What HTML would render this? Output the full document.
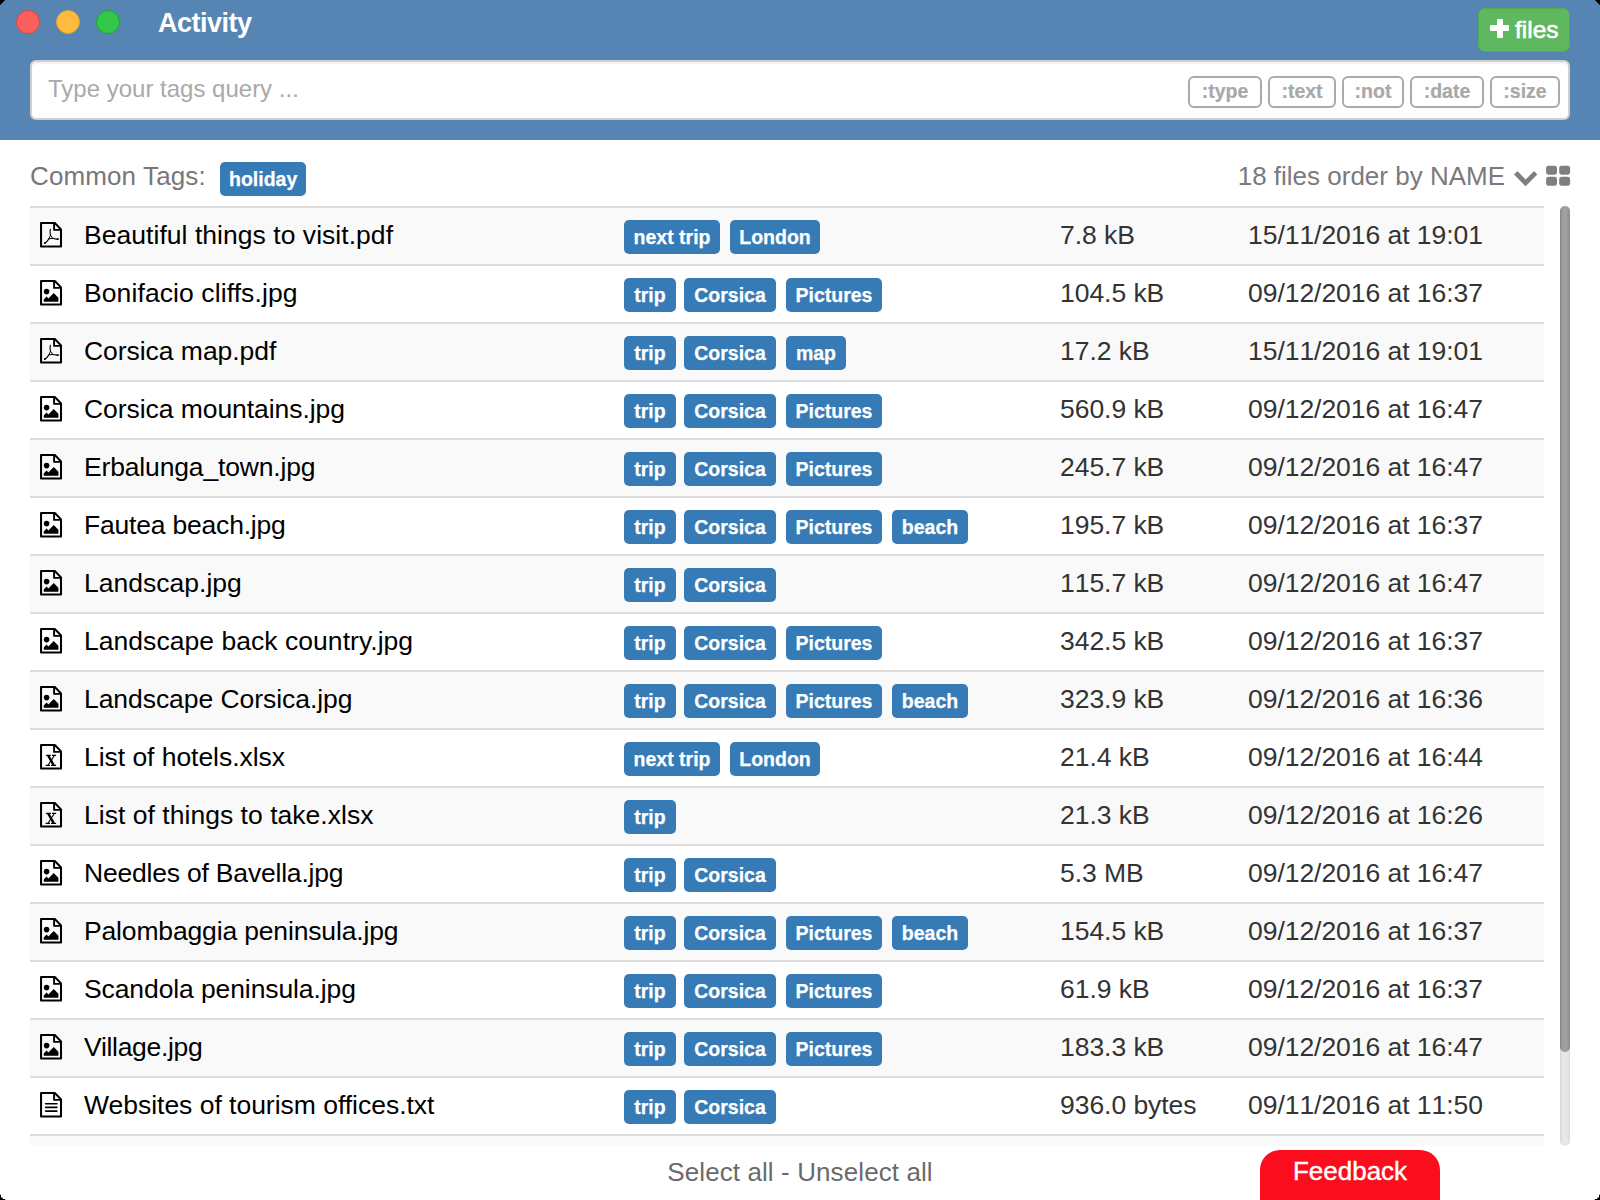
<!DOCTYPE html>
<html><head><meta charset="utf-8">
<style>
*{box-sizing:border-box;margin:0;padding:0}
html,body{width:1600px;height:1200px;overflow:hidden;background:#fff;font-family:"Liberation Sans",sans-serif}
.hdr{position:absolute;left:0;top:0;width:1600px;height:140px;background:#5785b3}
.dot{position:absolute;top:10px;width:24px;height:24px;border-radius:50%}
.title{position:absolute;left:158px;top:6px;font-size:27px;font-weight:bold;color:#fff;line-height:34px;letter-spacing:-0.5px}
.addbtn{position:absolute;left:1478px;top:8px;width:92px;height:44px;background:#5fb760;border:1px solid #52ad52;border-radius:7px}
.plus1{position:absolute;left:1490px;top:25px;width:19px;height:6px;background:#fff;border-radius:1px}
.plus2{position:absolute;left:1496.5px;top:19px;width:6px;height:19px;background:#fff;border-radius:1px}
.ftxt{position:absolute;left:1515px;top:15px;font-size:24.5px;font-weight:normal;color:#fff;line-height:30px;-webkit-text-stroke:0.6px #fff}
.search{position:absolute;left:30px;top:60px;width:1540px;height:60px;background:#fff;border:2px solid #cfcfcf;border-radius:6px;box-shadow:inset 0 2px 2px rgba(0,0,0,0.06)}
.ph{position:absolute;left:16px;top:12px;font-size:24px;color:#a9a9a9;line-height:30px}
.fb{position:absolute;top:14px;height:32px;border:2px solid #aaa;border-radius:6px;color:#a8a8a8;font-size:19.5px;font-weight:bold;line-height:26px;text-align:center;-webkit-text-stroke:0.2px #a8a8a8}
.ctl{position:absolute;left:30px;top:159px;font-size:26px;color:#777;line-height:34px;letter-spacing:0.12px}
.lb{display:inline-block;height:34px;background:#367bb6;color:#fff;font-weight:bold;font-size:19.5px;line-height:35px;text-align:center;border-radius:5px;vertical-align:top;letter-spacing:0;-webkit-text-stroke:0.25px #fff}
.order{position:absolute;right:95px;top:159px;font-size:26px;color:#7a7a7a;line-height:34px}
.row{position:absolute;left:30px;width:1514px;height:58px;border-top:2px solid #ddd}
.ic{position:absolute;left:9px;top:13px}
.nm{position:absolute;left:54px;top:12px;font-size:26.5px;color:#000;line-height:30px;white-space:nowrap;letter-spacing:0.05px}
.tags{position:absolute;left:594px;top:12px;white-space:nowrap;font-size:0}
.sz{position:absolute;left:1030px;top:12px;font-size:26.5px;color:#333;line-height:30px;letter-spacing:-0.05px;font-kerning:none}
.dt{position:absolute;left:1218px;top:12px;font-size:26.5px;color:#333;line-height:30px;letter-spacing:-0.05px;font-kerning:none}
.sb{position:absolute;left:1560px;top:206px;width:10px;height:940px;border-radius:5px;background:linear-gradient(90deg,#d6d6d6 0%,#e6e6e6 25%,#e8e8e8 60%,#dcdcdc 100%)}
.sbt{position:absolute;left:0;top:0;width:10px;height:846px;border-radius:5px;background:linear-gradient(90deg,#858585 0%,#9d9d9d 25%,#a2a2a2 60%,#8c8c8c 100%)}
.foot{position:absolute;left:0;width:1600px;top:1156px;text-align:center;font-size:26px;color:#6a6a6a;line-height:32px;letter-spacing:0.1px}
.feed{position:absolute;left:1260px;top:1150px;width:180px;height:60px;background:#fb0d1d;border-radius:20px 20px 0 0;color:#fff;font-size:26px;line-height:42px;text-align:center;-webkit-text-stroke:0.4px #fff}
</style></head><body>
<div class="hdr">
  <div class="dot" style="left:16px;background:#fc605c;border:1px solid #e0443e"></div>
  <div class="dot" style="left:56px;background:#fdbc40;border:1px solid #dea123"></div>
  <div class="dot" style="left:96px;background:#34c84a;border:1px solid #1aab29"></div>
  <div class="title">Activity</div>
  <div class="addbtn"></div><div class="plus1"></div><div class="plus2"></div><div class="ftxt">files</div>
  <div class="search">
    <div class="ph">Type your tags query ...</div>
    <div class="fb" style="left:1156px;width:74px">:type</div>
    <div class="fb" style="left:1236px;width:68px">:text</div>
    <div class="fb" style="left:1310px;width:62px">:not</div>
    <div class="fb" style="left:1378px;width:74px">:date</div>
    <div class="fb" style="left:1458px;width:70px">:size</div>
  </div>
</div>
<div class="ctl">Common Tags: <span class="lb" style="width:86px;margin-left:7px;position:relative;top:3px">holiday</span></div>
<div class="order">18 files order by NAME</div>
<svg style="position:absolute;left:1505px;top:158px" width="70" height="35" viewBox="1505 158 70 35">
  <path d="M1513.97 174.6L1517.47 171.1L1525.56 179.4L1534.09 171.1L1537.37 174.4L1525.56 186.2Z" fill="#7f7f7f"/>
  <rect x="1546.1" y="165.7" width="10.9" height="9" rx="2.4" fill="#7f7f7f"/>
  <rect x="1559.2" y="165.7" width="10.9" height="9" rx="2.4" fill="#7f7f7f"/>
  <rect x="1546.1" y="176.8" width="10.9" height="9" rx="2.4" fill="#7f7f7f"/>
  <rect x="1559.2" y="176.8" width="10.9" height="9" rx="2.4" fill="#7f7f7f"/>
</svg>
<div class="row" style="top:206px;background:#f9f9f9"><svg class="ic" width="26" height="30" viewBox="0 0 26 30"><path d="M2.05 1.95H15.8L22 8.4V25.4H2.05Z" fill="none" stroke="#000" stroke-width="2.05" stroke-linejoin="round"/><path d="M15.1 2V8.9H21.9" fill="none" stroke="#000" stroke-width="1.9" stroke-linejoin="round"/><path d="M11.4 8.3C11 9.6 10.9 11 11.2 12.5L11.5 14.2" fill="none" stroke="#000" stroke-width="1.15" stroke-linecap="round"/><path d="M11.5 14.2L9.9 17.9L13.6 17.3Z" fill="none" stroke="#000" stroke-width="0.95" stroke-linejoin="round"/><path d="M9.9 17.8C8.9 19.8 7.4 21.2 5.7 22.2M13.4 17.3C15 18.1 17 18.1 19.1 18" fill="none" stroke="#000" stroke-width="1.2" stroke-linecap="round"/><ellipse cx="5.9" cy="22" rx="1.1" ry="0.85" transform="rotate(-40 5.9 22)"/><ellipse cx="18.7" cy="18" rx="1.2" ry="0.85"/></svg><span class="nm" style="letter-spacing:0.041px">Beautiful things to visit.pdf</span><span class="tags"><span class="lb" style="width:96px;margin-right:10px">next trip</span><span class="lb" style="width:90px;margin-right:10px">London</span></span><span class="sz">7.8 kB</span><span class="dt">15/11/2016 at 19:01</span></div>
<div class="row" style="top:264px;background:#fff"><svg class="ic" width="26" height="30" viewBox="0 0 26 30"><path d="M2.05 1.95H15.8L22 8.4V25.4H2.05Z" fill="none" stroke="#000" stroke-width="2.05" stroke-linejoin="round"/><path d="M15.1 2V8.9H21.9" fill="none" stroke="#000" stroke-width="1.9" stroke-linejoin="round"/><circle cx="7.6" cy="12.6" r="2.8"/><path d="M4.75 22.8V20.4L7.6 17.6L9.4 19.4L14.75 14.1L19.4 18.7V22.8Z"/></svg><span class="nm" style="letter-spacing:0.097px">Bonifacio cliffs.jpg</span><span class="tags"><span class="lb" style="width:52px;margin-right:8px">trip</span><span class="lb" style="width:92px;margin-right:10px">Corsica</span><span class="lb" style="width:96px;margin-right:10px">Pictures</span></span><span class="sz">104.5 kB</span><span class="dt">09/12/2016 at 16:37</span></div>
<div class="row" style="top:322px;background:#f9f9f9"><svg class="ic" width="26" height="30" viewBox="0 0 26 30"><path d="M2.05 1.95H15.8L22 8.4V25.4H2.05Z" fill="none" stroke="#000" stroke-width="2.05" stroke-linejoin="round"/><path d="M15.1 2V8.9H21.9" fill="none" stroke="#000" stroke-width="1.9" stroke-linejoin="round"/><path d="M11.4 8.3C11 9.6 10.9 11 11.2 12.5L11.5 14.2" fill="none" stroke="#000" stroke-width="1.15" stroke-linecap="round"/><path d="M11.5 14.2L9.9 17.9L13.6 17.3Z" fill="none" stroke="#000" stroke-width="0.95" stroke-linejoin="round"/><path d="M9.9 17.8C8.9 19.8 7.4 21.2 5.7 22.2M13.4 17.3C15 18.1 17 18.1 19.1 18" fill="none" stroke="#000" stroke-width="1.2" stroke-linecap="round"/><ellipse cx="5.9" cy="22" rx="1.1" ry="0.85" transform="rotate(-40 5.9 22)"/><ellipse cx="18.7" cy="18" rx="1.2" ry="0.85"/></svg><span class="nm" style="letter-spacing:-0.043px">Corsica map.pdf</span><span class="tags"><span class="lb" style="width:52px;margin-right:8px">trip</span><span class="lb" style="width:92px;margin-right:10px">Corsica</span><span class="lb" style="width:60px;margin-right:10px">map</span></span><span class="sz">17.2 kB</span><span class="dt">15/11/2016 at 19:01</span></div>
<div class="row" style="top:380px;background:#fff"><svg class="ic" width="26" height="30" viewBox="0 0 26 30"><path d="M2.05 1.95H15.8L22 8.4V25.4H2.05Z" fill="none" stroke="#000" stroke-width="2.05" stroke-linejoin="round"/><path d="M15.1 2V8.9H21.9" fill="none" stroke="#000" stroke-width="1.9" stroke-linejoin="round"/><circle cx="7.6" cy="12.6" r="2.8"/><path d="M4.75 22.8V20.4L7.6 17.6L9.4 19.4L14.75 14.1L19.4 18.7V22.8Z"/></svg><span class="nm" style="letter-spacing:-0.06px">Corsica mountains.jpg</span><span class="tags"><span class="lb" style="width:52px;margin-right:8px">trip</span><span class="lb" style="width:92px;margin-right:10px">Corsica</span><span class="lb" style="width:96px;margin-right:10px">Pictures</span></span><span class="sz">560.9 kB</span><span class="dt">09/12/2016 at 16:47</span></div>
<div class="row" style="top:438px;background:#f9f9f9"><svg class="ic" width="26" height="30" viewBox="0 0 26 30"><path d="M2.05 1.95H15.8L22 8.4V25.4H2.05Z" fill="none" stroke="#000" stroke-width="2.05" stroke-linejoin="round"/><path d="M15.1 2V8.9H21.9" fill="none" stroke="#000" stroke-width="1.9" stroke-linejoin="round"/><circle cx="7.6" cy="12.6" r="2.8"/><path d="M4.75 22.8V20.4L7.6 17.6L9.4 19.4L14.75 14.1L19.4 18.7V22.8Z"/></svg><span class="nm" style="letter-spacing:-0.156px">Erbalunga_town.jpg</span><span class="tags"><span class="lb" style="width:52px;margin-right:8px">trip</span><span class="lb" style="width:92px;margin-right:10px">Corsica</span><span class="lb" style="width:96px;margin-right:10px">Pictures</span></span><span class="sz">245.7 kB</span><span class="dt">09/12/2016 at 16:47</span></div>
<div class="row" style="top:496px;background:#fff"><svg class="ic" width="26" height="30" viewBox="0 0 26 30"><path d="M2.05 1.95H15.8L22 8.4V25.4H2.05Z" fill="none" stroke="#000" stroke-width="2.05" stroke-linejoin="round"/><path d="M15.1 2V8.9H21.9" fill="none" stroke="#000" stroke-width="1.9" stroke-linejoin="round"/><circle cx="7.6" cy="12.6" r="2.8"/><path d="M4.75 22.8V20.4L7.6 17.6L9.4 19.4L14.75 14.1L19.4 18.7V22.8Z"/></svg><span class="nm" style="letter-spacing:-0.197px">Fautea beach.jpg</span><span class="tags"><span class="lb" style="width:52px;margin-right:8px">trip</span><span class="lb" style="width:92px;margin-right:10px">Corsica</span><span class="lb" style="width:96px;margin-right:10px">Pictures</span><span class="lb" style="width:76px;margin-right:10px">beach</span></span><span class="sz">195.7 kB</span><span class="dt">09/12/2016 at 16:37</span></div>
<div class="row" style="top:554px;background:#f9f9f9"><svg class="ic" width="26" height="30" viewBox="0 0 26 30"><path d="M2.05 1.95H15.8L22 8.4V25.4H2.05Z" fill="none" stroke="#000" stroke-width="2.05" stroke-linejoin="round"/><path d="M15.1 2V8.9H21.9" fill="none" stroke="#000" stroke-width="1.9" stroke-linejoin="round"/><circle cx="7.6" cy="12.6" r="2.8"/><path d="M4.75 22.8V20.4L7.6 17.6L9.4 19.4L14.75 14.1L19.4 18.7V22.8Z"/></svg><span class="nm" style="letter-spacing:0.014px">Landscap.jpg</span><span class="tags"><span class="lb" style="width:52px;margin-right:8px">trip</span><span class="lb" style="width:92px;margin-right:10px">Corsica</span></span><span class="sz">115.7 kB</span><span class="dt">09/12/2016 at 16:47</span></div>
<div class="row" style="top:612px;background:#fff"><svg class="ic" width="26" height="30" viewBox="0 0 26 30"><path d="M2.05 1.95H15.8L22 8.4V25.4H2.05Z" fill="none" stroke="#000" stroke-width="2.05" stroke-linejoin="round"/><path d="M15.1 2V8.9H21.9" fill="none" stroke="#000" stroke-width="1.9" stroke-linejoin="round"/><circle cx="7.6" cy="12.6" r="2.8"/><path d="M4.75 22.8V20.4L7.6 17.6L9.4 19.4L14.75 14.1L19.4 18.7V22.8Z"/></svg><span class="nm" style="letter-spacing:0.042px">Landscape back country.jpg</span><span class="tags"><span class="lb" style="width:52px;margin-right:8px">trip</span><span class="lb" style="width:92px;margin-right:10px">Corsica</span><span class="lb" style="width:96px;margin-right:10px">Pictures</span></span><span class="sz">342.5 kB</span><span class="dt">09/12/2016 at 16:37</span></div>
<div class="row" style="top:670px;background:#f9f9f9"><svg class="ic" width="26" height="30" viewBox="0 0 26 30"><path d="M2.05 1.95H15.8L22 8.4V25.4H2.05Z" fill="none" stroke="#000" stroke-width="2.05" stroke-linejoin="round"/><path d="M15.1 2V8.9H21.9" fill="none" stroke="#000" stroke-width="1.9" stroke-linejoin="round"/><circle cx="7.6" cy="12.6" r="2.8"/><path d="M4.75 22.8V20.4L7.6 17.6L9.4 19.4L14.75 14.1L19.4 18.7V22.8Z"/></svg><span class="nm" style="letter-spacing:-0.055px">Landscape Corsica.jpg</span><span class="tags"><span class="lb" style="width:52px;margin-right:8px">trip</span><span class="lb" style="width:92px;margin-right:10px">Corsica</span><span class="lb" style="width:96px;margin-right:10px">Pictures</span><span class="lb" style="width:76px;margin-right:10px">beach</span></span><span class="sz">323.9 kB</span><span class="dt">09/12/2016 at 16:36</span></div>
<div class="row" style="top:728px;background:#fff"><svg class="ic" width="26" height="30" viewBox="0 0 26 30"><path d="M2.05 1.95H15.8L22 8.4V25.4H2.05Z" fill="none" stroke="#000" stroke-width="2.05" stroke-linejoin="round"/><path d="M15.1 2V8.9H21.9" fill="none" stroke="#000" stroke-width="1.9" stroke-linejoin="round"/><path d="M6.9 12.3H11.8M12.9 12.3H17.1M6.6 22.4H11M12 22.4H17.1" stroke="#000" stroke-width="1.2"/><path d="M9.2 12.5L14.7 22.2" stroke="#000" stroke-width="2.4"/><path d="M15.4 12.5L9 22.2" stroke="#000" stroke-width="1.1"/></svg><span class="nm" style="letter-spacing:-0.044px">List of hotels.xlsx</span><span class="tags"><span class="lb" style="width:96px;margin-right:10px">next trip</span><span class="lb" style="width:90px;margin-right:10px">London</span></span><span class="sz">21.4 kB</span><span class="dt">09/12/2016 at 16:44</span></div>
<div class="row" style="top:786px;background:#f9f9f9"><svg class="ic" width="26" height="30" viewBox="0 0 26 30"><path d="M2.05 1.95H15.8L22 8.4V25.4H2.05Z" fill="none" stroke="#000" stroke-width="2.05" stroke-linejoin="round"/><path d="M15.1 2V8.9H21.9" fill="none" stroke="#000" stroke-width="1.9" stroke-linejoin="round"/><path d="M6.9 12.3H11.8M12.9 12.3H17.1M6.6 22.4H11M12 22.4H17.1" stroke="#000" stroke-width="1.2"/><path d="M9.2 12.5L14.7 22.2" stroke="#000" stroke-width="2.4"/><path d="M15.4 12.5L9 22.2" stroke="#000" stroke-width="1.1"/></svg><span class="nm" style="letter-spacing:0.031px">List of things to take.xlsx</span><span class="tags"><span class="lb" style="width:52px;margin-right:8px">trip</span></span><span class="sz">21.3 kB</span><span class="dt">09/12/2016 at 16:26</span></div>
<div class="row" style="top:844px;background:#fff"><svg class="ic" width="26" height="30" viewBox="0 0 26 30"><path d="M2.05 1.95H15.8L22 8.4V25.4H2.05Z" fill="none" stroke="#000" stroke-width="2.05" stroke-linejoin="round"/><path d="M15.1 2V8.9H21.9" fill="none" stroke="#000" stroke-width="1.9" stroke-linejoin="round"/><circle cx="7.6" cy="12.6" r="2.8"/><path d="M4.75 22.8V20.4L7.6 17.6L9.4 19.4L14.75 14.1L19.4 18.7V22.8Z"/></svg><span class="nm" style="letter-spacing:-0.198px">Needles of Bavella.jpg</span><span class="tags"><span class="lb" style="width:52px;margin-right:8px">trip</span><span class="lb" style="width:92px;margin-right:10px">Corsica</span></span><span class="sz">5.3 MB</span><span class="dt">09/12/2016 at 16:47</span></div>
<div class="row" style="top:902px;background:#f9f9f9"><svg class="ic" width="26" height="30" viewBox="0 0 26 30"><path d="M2.05 1.95H15.8L22 8.4V25.4H2.05Z" fill="none" stroke="#000" stroke-width="2.05" stroke-linejoin="round"/><path d="M15.1 2V8.9H21.9" fill="none" stroke="#000" stroke-width="1.9" stroke-linejoin="round"/><circle cx="7.6" cy="12.6" r="2.8"/><path d="M4.75 22.8V20.4L7.6 17.6L9.4 19.4L14.75 14.1L19.4 18.7V22.8Z"/></svg><span class="nm" style="letter-spacing:-0.154px">Palombaggia peninsula.jpg</span><span class="tags"><span class="lb" style="width:52px;margin-right:8px">trip</span><span class="lb" style="width:92px;margin-right:10px">Corsica</span><span class="lb" style="width:96px;margin-right:10px">Pictures</span><span class="lb" style="width:76px;margin-right:10px">beach</span></span><span class="sz">154.5 kB</span><span class="dt">09/12/2016 at 16:37</span></div>
<div class="row" style="top:960px;background:#fff"><svg class="ic" width="26" height="30" viewBox="0 0 26 30"><path d="M2.05 1.95H15.8L22 8.4V25.4H2.05Z" fill="none" stroke="#000" stroke-width="2.05" stroke-linejoin="round"/><path d="M15.1 2V8.9H21.9" fill="none" stroke="#000" stroke-width="1.9" stroke-linejoin="round"/><circle cx="7.6" cy="12.6" r="2.8"/><path d="M4.75 22.8V20.4L7.6 17.6L9.4 19.4L14.75 14.1L19.4 18.7V22.8Z"/></svg><span class="nm" style="letter-spacing:-0.102px">Scandola peninsula.jpg</span><span class="tags"><span class="lb" style="width:52px;margin-right:8px">trip</span><span class="lb" style="width:92px;margin-right:10px">Corsica</span><span class="lb" style="width:96px;margin-right:10px">Pictures</span></span><span class="sz">61.9 kB</span><span class="dt">09/12/2016 at 16:37</span></div>
<div class="row" style="top:1018px;background:#f9f9f9"><svg class="ic" width="26" height="30" viewBox="0 0 26 30"><path d="M2.05 1.95H15.8L22 8.4V25.4H2.05Z" fill="none" stroke="#000" stroke-width="2.05" stroke-linejoin="round"/><path d="M15.1 2V8.9H21.9" fill="none" stroke="#000" stroke-width="1.9" stroke-linejoin="round"/><circle cx="7.6" cy="12.6" r="2.8"/><path d="M4.75 22.8V20.4L7.6 17.6L9.4 19.4L14.75 14.1L19.4 18.7V22.8Z"/></svg><span class="nm" style="letter-spacing:-0.3px">Village.jpg</span><span class="tags"><span class="lb" style="width:52px;margin-right:8px">trip</span><span class="lb" style="width:92px;margin-right:10px">Corsica</span><span class="lb" style="width:96px;margin-right:10px">Pictures</span></span><span class="sz">183.3 kB</span><span class="dt">09/12/2016 at 16:47</span></div>
<div class="row" style="top:1076px;background:#fff"><svg class="ic" width="26" height="30" viewBox="0 0 26 30"><path d="M2.05 1.95H15.8L22 8.4V25.4H2.05Z" fill="none" stroke="#000" stroke-width="2.05" stroke-linejoin="round"/><path d="M15.1 2V8.9H21.9" fill="none" stroke="#000" stroke-width="1.9" stroke-linejoin="round"/><path d="M6.6 12.7H17.9M6.6 16.4H17.9M6.6 20.1H17.9" stroke="#000" stroke-width="1.6" stroke-linecap="round"/></svg><span class="nm" style="letter-spacing:-0.02px">Websites of tourism offices.txt</span><span class="tags"><span class="lb" style="width:52px;margin-right:8px">trip</span><span class="lb" style="width:92px;margin-right:10px">Corsica</span></span><span class="sz">936.0 bytes</span><span class="dt">09/11/2016 at 11:50</span></div>
<div class="row" style="top:1134px;background:#f9f9f9;height:12px"></div>
<div class="sb"><div class="sbt"></div></div>
<div class="foot">Select all - Unselect all</div>
<div class="feed">Feedback</div>
<svg style="position:absolute;left:0;top:0" width="1600" height="1200" viewBox="0 0 1600 1200">
<path d="M0 0H5.2L0 5.2Z M1600 0H1594.8L1600 5.2Z M0 1200V1194.8H1L1 1197L2.5 1198L3 1199H5.2V1200Z M1600 1200V1194.8H1599L1599 1197L1597.5 1198L1597 1199H1594.8V1200Z" fill="#000"/>
</svg>
</body></html>
